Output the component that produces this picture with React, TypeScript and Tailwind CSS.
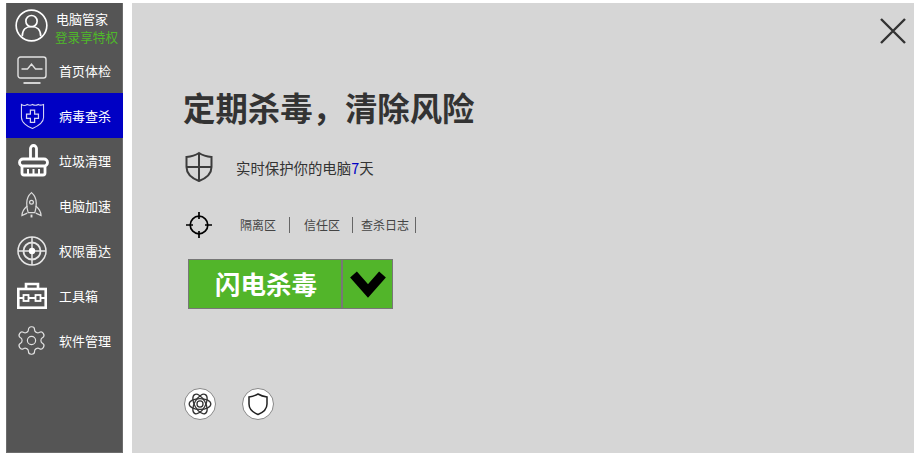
import type { ReactNode } from "react";

const font = { fontFamily: '"Noto Sans CJK SC", "Liberation Sans", sans-serif' };

function Monitor() {
  return (
    <svg width="30" height="29" viewBox="0 0 30 29" fill="none" stroke="#e2e2e2" strokeWidth="1.400">
      <rect x="1" y="1" width="28" height="21" rx="2.500" />
      <path d="M4.500 13h6l4-5 4 5h7" />
      <path d="M6.500 27h17" strokeWidth="1.800" />
    </svg>
  );
}

function ShieldPlus() {
  return (
    <svg width="25" height="28" viewBox="0 0 26 28" fill="none" stroke="#d8d8f4" strokeWidth="1.100" className="ml-[1px]">
      <path d="M1.500 2c2 1.400 4 1.400 6 0 2 1 3.500 1.200 5.500 0 2 1.200 4 1.200 6 0 1.500 1 3 1 5.500 0v13.500c0 5-6 9-11.500 11.500C7.500 25 1.500 20.500 1.500 15.500z" />
      <path d="M10.800 8h4.400v4h4v4.500h-4v4h-4.400v-4h-4V12h4z" strokeWidth="1.300" />
    </svg>
  );
}

function Brush() {
  return (
    <svg width="31" height="33" viewBox="0 0 31 33" fill="none" stroke="#fff" strokeWidth="2.800" className="ml-[3px]">
      <path d="M12.500 15V4.500a3 3 0 0 1 6 0V15" />
      <path d="M5 15h21a3.500 3.500 0 0 1 0 7H5a3.500 3.500 0 0 1 0-7z" />
      <path d="M4 22v7a2 2 0 0 0 2 2h19a2 2 0 0 0 2-2v-7" />
      <path d="M10 25v6M15.500 25v6M21 25v6" strokeWidth="2" />
    </svg>
  );
}

function Rocket() {
  return (
    <svg width="21" height="30" viewBox="0 0 22 30" fill="none" stroke="#dcdcdc" strokeWidth="1.300">
      <path d="M11 1c3.500 3 5 7 5 11 0 4-.7 7-1.500 10h-7C6.700 19 6 16 6 12c0-4 1.500-8 5-11z" />
      <circle cx="11" cy="11" r="2" />
      <path d="M6.500 15C3 18 1 21 1 25l5.500-2.500M15.500 15c3.500 3 5.500 6 5.500 10l-5.500-2.500" />
      <path d="M11 24v3" strokeWidth="2" />
    </svg>
  );
}

function Radar() {
  return (
    <svg width="30" height="30" viewBox="0 0 30 30" fill="none" stroke="#e6e6e6" strokeWidth="1.500">
      <circle cx="15" cy="15" r="14" />
      <circle cx="15" cy="15" r="8.500" strokeWidth="1.800" />
      <path d="M15 1v28M1 15h28" />
      <circle cx="15" cy="15" r="3.200" fill="#fff" stroke="none" />
    </svg>
  );
}

function Toolbox() {
  return (
    <svg width="30" height="27" viewBox="0 0 30 27" fill="none" stroke="#fff" strokeWidth="2.600">
      <path d="M9 7V2h12v5" />
      <rect x="1.300" y="7" width="27.400" height="18.700" />
      <path d="M1 16h5M12 16h6M24 16h5" strokeWidth="2" />
      <rect x="6.500" y="13" width="5" height="6" strokeWidth="1.800" />
      <rect x="18.500" y="13" width="5" height="6" strokeWidth="1.800" />
    </svg>
  );
}

function Gear() {
  return (
    <svg width="33" height="33" viewBox="0 0 24 24" fill="none" stroke="#e2e2e2" strokeWidth="0.850" className="-mx-[2px]">
      <path d="M12.220 2h-.44a2 2 0 0 0-2 2v.180a2 2 0 0 1-1 1.730l-.43.250a2 2 0 0 1-2 0l-.150-.080a2 2 0 0 0-2.730.730l-.220.380a2 2 0 0 0 .730 2.730l.150.100a2 2 0 0 1 1 1.720v.510a2 2 0 0 1-1 1.740l-.150.090a2 2 0 0 0-.730 2.730l.220.380a2 2 0 0 0 2.730.730l.150-.080a2 2 0 0 1 2 0l.430.250a2 2 0 0 1 1 1.730V20a2 2 0 0 0 2 2h.440a2 2 0 0 0 2-2v-.180a2 2 0 0 1 1-1.730l.430-.250a2 2 0 0 1 2 0l.150.080a2 2 0 0 0 2.730-.730l.220-.390a2 2 0 0 0-.730-2.730l-.150-.080a2 2 0 0 1-1-1.740v-.500a2 2 0 0 1 1-1.740l.150-.090a2 2 0 0 0 .730-2.730l-.220-.380a2 2 0 0 0-2.730-.730l-.150.080a2 2 0 0 1-2 0l-.430-.250a2 2 0 0 1-1-1.730V4a2 2 0 0 0-2-2z" />
      <circle cx="12" cy="12" r="3" />
    </svg>
  );
}

function NavItem({ icon, label, active }: { icon: ReactNode; label: string; active?: boolean }) {
  return (
    <div className={`flex h-[45px] items-center ${active ? "-mx-px bg-[#0000c4] px-px" : ""}`}>
      <div className="flex w-[52px] shrink-0 justify-center pr-[3px]">{icon}</div>
      <span className="text-[13px] text-white">{label}</span>
    </div>
  );
}

export default function App() {
  return (
    <div className="flex h-[456px] w-[919px] overflow-hidden bg-white pb-[3px] pl-[6px] pr-[5px] pt-[3px]" style={font}>
      {/* Sidebar */}
      <aside className="w-[117px] shrink-0 border-x border-b border-[#6c6c6c] bg-[#555555]">
        <div className="flex h-[45px] items-center">
          <div className="flex w-[49px] shrink-0 justify-center">
            <svg width="33" height="33" viewBox="0 0 34 34" fill="none" stroke="#fff" strokeWidth="1.700">
              <circle cx="17" cy="17" r="15.800" />
              <circle cx="17" cy="12.500" r="5.800" />
              <path d="M7.500 28c0-6.500 4-10 9.500-10s9.500 3.500 9.500 10" />
            </svg>
          </div>
          <div className="flex flex-col pt-[5px] leading-[18px]">
            <span className="text-[13px] text-white">电脑管家</span>
            <span className="-ml-px whitespace-nowrap text-[12.6px] text-[#4fb82a]">登录享特权</span>
          </div>
        </div>
        <NavItem icon={<Monitor />} label="首页体检" />
        <NavItem icon={<ShieldPlus />} label="病毒查杀" active />
        <NavItem icon={<Brush />} label="垃圾清理" />
        <NavItem icon={<Rocket />} label="电脑加速" />
        <NavItem icon={<Radar />} label="权限雷达" />
        <NavItem icon={<Toolbox />} label="工具箱" />
        <NavItem icon={<Gear />} label="软件管理" />
      </aside>

      {/* Main panel */}
      <main className="ml-[9px] flex flex-1 flex-col bg-[#d6d6d6] pl-[52px]">
        <div className="flex justify-end pr-[7px] pt-[14px]">
          <svg width="28" height="28" viewBox="0 0 28 28" fill="none" stroke="#333" strokeWidth="2.400">
            <path d="M2 2l24 24M26 2L2 26" />
          </svg>
        </div>
        <h1 className="-ml-px mt-[40px] text-[32.400px] font-bold leading-[44px] text-[#333]">定期杀毒，清除风险</h1>

        <div className="mt-[22px] flex h-[32px] items-center">
          <svg width="30" height="32" viewBox="0 0 30 32" fill="none" stroke="#3c3c3c" strokeWidth="2">
            <path d="M15 2c3 2 7 3.500 12.500 4v10c0 7-6 11.500-12.500 14C8.500 27.500 2.500 23 2.500 16V6C8 5.500 12 4 15 2z" />
            <path d="M15 2v28M2.500 16h25" />
          </svg>
          <span className="ml-[22px] pt-[2px] text-[14.400px] text-[#333]">
            实时保护你的电脑<span className="text-[#0000c4]">7</span>天
          </span>
        </div>

        <div className="mt-[28px] flex h-[28px] items-center">
          <svg width="26" height="26" viewBox="0 0 26 26" fill="none" stroke="#000" strokeWidth="1.700" className="ml-[2px]">
            <circle cx="13" cy="13" r="8.800" />
            <path d="M13 0v7M13 19v7M0 13h7M19 13h7" />
          </svg>
          <div className="ml-[28px] flex items-center text-[12px] text-[#444]">
            <span className="flex h-[16px] w-[50px] items-center border-r border-[#666]">隔离区</span>
            <span className="flex h-[16px] w-[63px] items-center border-r border-[#666] pl-[14px]">信任区</span>
            <span className="flex h-[16px] w-[63px] items-center border-r border-[#666] pl-[8px]">查杀日志</span>
          </div>
        </div>

        <div className="ml-[4px] mt-[20px] flex h-[50px] w-[205px] border border-[#777] bg-[#52b52a]">
          <div className="flex w-[154px] items-center justify-center border-r-2 border-[#777] pb-[2px] pl-[2px] text-[25.500px] font-bold text-white">
            闪电杀毒
          </div>
          <div className="flex flex-1 items-center justify-center">
            <svg width="36" height="27" viewBox="0 0 36 27" fill="none" stroke="#000" strokeWidth="9" strokeLinejoin="miter">
              <path d="M3.500 3.500L18 20 32.500 3.500" />
            </svg>
          </div>
        </div>

        <div className="mt-[79px] flex gap-[26px]">
          <div className="flex h-[32px] w-[32px] items-center justify-center rounded-full border border-[#888] bg-white">
            <svg width="26" height="26" viewBox="0 0 24 24" fill="none" stroke="#333" strokeWidth="1.200">
              <circle cx="12" cy="12" r="2.800" />
              <ellipse cx="12" cy="12" rx="10" ry="5" />
              <ellipse cx="12" cy="12" rx="10" ry="5" transform="rotate(60 12 12)" />
              <ellipse cx="12" cy="12" rx="10" ry="5" transform="rotate(120 12 12)" />
            </svg>
          </div>
          <div className="flex h-[32px] w-[32px] items-center justify-center rounded-full border border-[#888] bg-white">
            <svg width="22" height="24" viewBox="0 0 22 24" fill="none" stroke="#222" strokeWidth="1.500">
              <path d="M11 2c2.500 1.500 5.500 2.500 9 3v7c0 5-4 8.500-9 10.500C6 20.500 2 17 2 12V5c3.500-.5 6.500-1.500 9-3z" />
            </svg>
          </div>
        </div>
      </main>
    </div>
  );
}
